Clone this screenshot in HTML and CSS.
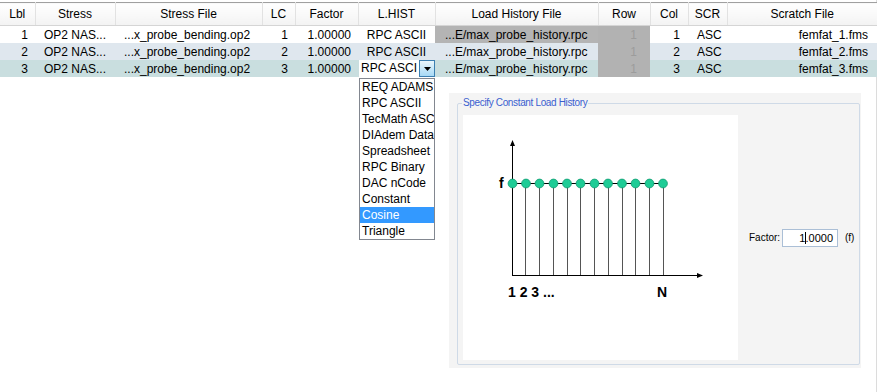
FILE: index.html
```html
<!DOCTYPE html>
<html lang="en">
<head>
    <meta charset="UTF-8">
    <title>Load Cases</title>
    <link rel="stylesheet" href="styles.css">
</head>
<body>
    <div class="frame">
        <table class="grid">
            <colgroup>
                <col style="width:35px"><col style="width:80px"><col style="width:147px">
                <col style="width:33px"><col style="width:63px"><col style="width:77px">
                <col style="width:163px"><col style="width:52px"><col style="width:38px">
                <col style="width:39px"><col style="width:150px">
            </colgroup>
            <thead>
                <tr>
                    <th>Lbl</th><th>Stress</th><th>Stress File</th><th>LC</th><th>Factor</th>
                    <th>L.HIST</th><th>Load History File</th><th>Row</th><th>Col</th><th>SCR</th><th>Scratch File</th>
                </tr>
            </thead>
            <tbody>
                <tr class="row-a">
                    <td class="num">1</td><td class="txt">OP2 NAS...</td><td class="txt">...x_probe_bending.op2</td>
                    <td class="num">1</td><td class="num">1.00000</td><td class="mid">RPC ASCII</td>
                    <td class="txt dim">...E/max_probe_history.rpc</td><td class="num ro">1</td><td class="num">1</td>
                    <td class="txt">ASC</td><td class="num">femfat_1.fms</td>
                </tr>
                <tr class="row-b">
                    <td class="num">2</td><td class="txt">OP2 NAS...</td><td class="txt">...x_probe_bending.op2</td>
                    <td class="num">2</td><td class="num">1.00000</td><td class="mid">RPC ASCII</td>
                    <td class="txt">...E/max_probe_history.rpc</td><td class="num ro">1</td><td class="num">2</td>
                    <td class="txt">ASC</td><td class="num">femfat_2.fms</td>
                </tr>
                <tr class="row-sel">
                    <td class="num">3</td><td class="txt">OP2 NAS...</td><td class="txt">...x_probe_bending.op2</td>
                    <td class="num">3</td><td class="num">1.00000</td>
                    <td class="combo-cell">
                        <div class="combo">
                            <span class="combo-text">RPC ASCI</span>
                            <span class="combo-btn"><svg width="7" height="4" viewBox="0 0 7 4"><path d="M0 0h7L3.5 4z" fill="#000"/></svg></span>
                        </div>
                        <ul class="droplist">
                            <li>REQ ADAMS</li>
                            <li>RPC ASCII</li>
                            <li>TecMath ASCII</li>
                            <li>DIAdem Data</li>
                            <li>Spreadsheet</li>
                            <li>RPC Binary</li>
                            <li>DAC nCode</li>
                            <li>Constant</li>
                            <li class="picked">Cosine</li>
                            <li>Triangle</li>
                        </ul>
                    </td>
                    <td class="txt">...E/max_probe_history.rpc</td><td class="num ro">1</td><td class="num">3</td>
                    <td class="txt">ASC</td><td class="num">femfat_3.fms</td>
                </tr>
            </tbody>
        </table>

        <div class="panel">
            <div class="group">
                <span class="group-title">Specify Constant Load History</span>
                <div class="group-body">
                    <div class="canvas">
                        <svg width="275" height="245" viewBox="0 0 275 245">
                            <g stroke="#555" stroke-width="1">
                                <line x1="62.5" y1="68" x2="62.5" y2="160"/>
                                <line x1="76.5" y1="68" x2="76.5" y2="160"/>
                                <line x1="90.5" y1="68" x2="90.5" y2="160"/>
                                <line x1="104.5" y1="68" x2="104.5" y2="160"/>
                                <line x1="117.5" y1="68" x2="117.5" y2="160"/>
                                <line x1="131.5" y1="68" x2="131.5" y2="160"/>
                                <line x1="145.5" y1="68" x2="145.5" y2="160"/>
                                <line x1="159.5" y1="68" x2="159.5" y2="160"/>
                                <line x1="172.5" y1="68" x2="172.5" y2="160"/>
                                <line x1="186.5" y1="68" x2="186.5" y2="160"/>
                                <line x1="200.5" y1="68" x2="200.5" y2="160"/>
                            </g>
                            <g stroke="#000" stroke-width="1" fill="#000">
                                <line x1="49.5" y1="30" x2="49.5" y2="160.5"/>
                                <line x1="49" y1="160.5" x2="234" y2="160.5"/>
                                <line x1="49" y1="68.5" x2="200" y2="68.5"/>
                                <path d="M49.5 25l-2.5 6h5z" stroke="none"/>
                                <path d="M240 160.5l-6-2.5v5z" stroke="none"/>
                            </g>
                            <g fill="#1fcc96" stroke="#0e9a70" stroke-width="0.8">
                                <circle cx="49.5" cy="68.5" r="4.4"/>
                                <circle cx="63" cy="68.5" r="4.4"/>
                                <circle cx="76.5" cy="68.5" r="4.4"/>
                                <circle cx="90.5" cy="68.5" r="4.4"/>
                                <circle cx="104" cy="68.5" r="4.4"/>
                                <circle cx="117.5" cy="68.5" r="4.4"/>
                                <circle cx="131.5" cy="68.5" r="4.4"/>
                                <circle cx="145" cy="68.5" r="4.4"/>
                                <circle cx="159" cy="68.5" r="4.4"/>
                                <circle cx="172.5" cy="68.5" r="4.4"/>
                                <circle cx="186.5" cy="68.5" r="4.4"/>
                                <circle cx="200" cy="68.5" r="4.4"/>
                            </g>
                            <g font-family="Liberation Sans, Arial, sans-serif" font-weight="bold" font-size="14" fill="#000">
                                <text x="36" y="73">f</text>
                                <text x="45" y="182">1 2 3 ...</text>
                                <text x="194" y="182">N</text>
                            </g>
                        </svg>
                    </div>
                    <div class="factor">
                        <span class="factor-label">Factor:</span>
                        <div class="factor-input">1<span class="caret"></span>.0000</div>
                        <span class="factor-unit">(f)</span>
                    </div>
                </div>
            </div>
        </div>
    </div>
</body>
</html>
```

FILE: styles.css
```css
body {
    margin: 0;
    font-family: "Liberation Sans", Arial, sans-serif;
    font-size: 12px;
    color: #000;
    background: #ffffff;
}
.frame {
    width: 877px;
    height: 392px;
    border-right: 1px solid #dcdcdc;
    padding-top: 2px;
    box-sizing: border-box;
}
.grid {
    width: 877px;
    border-collapse: collapse;
    table-layout: fixed;
    border-top: 1px solid #a0a0a0;
}
.grid th {
    height: 22px;
    padding: 0;
    font-weight: normal;
    text-align: center;
    background: linear-gradient(#ffffff, #f3f3f3);
    border-right: 1px solid #e2e2e2;
    border-bottom: 1px solid #d5d5d5;
    white-space: nowrap;
    overflow: hidden;
}
.grid th:last-child {
    border-right: none;
}
.grid td {
    height: 17px;
    padding: 0;
    white-space: nowrap;
    overflow: hidden;
}
.grid .row-sel td {
    height: 16px;
}
.row-a { background: #ffffff; }
.row-b { background: #dfe7ee; }
.row-sel { background: #c9dedf; }

.num { text-align: right; padding-right: 7px !important; }
.txt { text-align: left; padding-left: 9px !important; }
.mid { text-align: center; }
.dim { background: #b4b4b4; }
.ro {
    background: #b2b2b2;
    color: #9c9c9c;
    padding-right: 13px !important;
}
.grid td:nth-child(9) { padding-right: 8px !important; }
.grid td:nth-child(11) { padding-right: 9px !important; }
.grid td:nth-child(7) { padding-left: 10px !important; }

.combo-cell {
    position: relative;
    overflow: visible !important;
}
.combo {
    display: flex;
    height: 17px;
    margin-left: 1px;
    background: #ffffff;
}
.combo-text {
    flex: 1;
    padding-left: 2px;
    line-height: 17px;
    overflow: hidden;
}
.combo-btn {
    width: 14px;
    display: flex;
    align-items: center;
    justify-content: center;
    border: 1px solid #3c7fb1;
    background: linear-gradient(#eaf6fd, #a7d9f5);
}
.droplist {
    position: absolute;
    left: 1px;
    top: 18px;
    width: 74px;
    margin: 0;
    padding: 0;
    list-style: none;
    background: #ffffff;
    border: 1px solid #828790;
    overflow: hidden;
    z-index: 2;
}
.droplist li {
    height: 16px;
    line-height: 16px;
    padding-left: 2px;
    white-space: nowrap;
    overflow: hidden;
}
.droplist .picked {
    background: #3399ff;
    color: #ffffff;
}

.panel {
    width: 412px;
    height: 275px;
    margin: 16px 0 0 449px;
    padding: 10px 1px 3px 8px;
    box-sizing: border-box;
    background: #f4f4f4;
    overflow: hidden;
}
.group {
    position: relative;
    height: 262px;
    padding: 11px 0 0 5px;
    box-sizing: border-box;
    border: 1px solid #cfdae7;
    border-radius: 2px;
}
.group-title {
    position: absolute;
    left: 4px;
    top: -7px;
    padding: 0 1px;
    line-height: 12px;
    font-size: 10px;
    letter-spacing: -0.35px;
    color: #3a5fd0;
    background: #f4f4f4;
}
.group-body {
    display: flex;
    align-items: center;
}
.canvas {
    width: 275px;
    height: 245px;
    background: #ffffff;
}
.canvas svg {
    display: block;
}
.factor {
    display: flex;
    align-items: center;
    margin-left: 11px;
    font-size: 10px;
}
.factor-label {
    width: 33px;
}
.factor-input {
    width: 56px;
    height: 18px;
    box-sizing: border-box;
    border: 1px solid #abbfd6;
    background: #ffffff;
    text-align: right;
    padding-right: 4px;
    line-height: 16px;
    font-size: 11px;
}
.caret {
    display: inline-block;
    width: 1px;
    height: 12px;
    margin-right: -1px;
    vertical-align: -2px;
    background: #000;
}
.factor-unit {
    margin-left: 7px;
}
```
